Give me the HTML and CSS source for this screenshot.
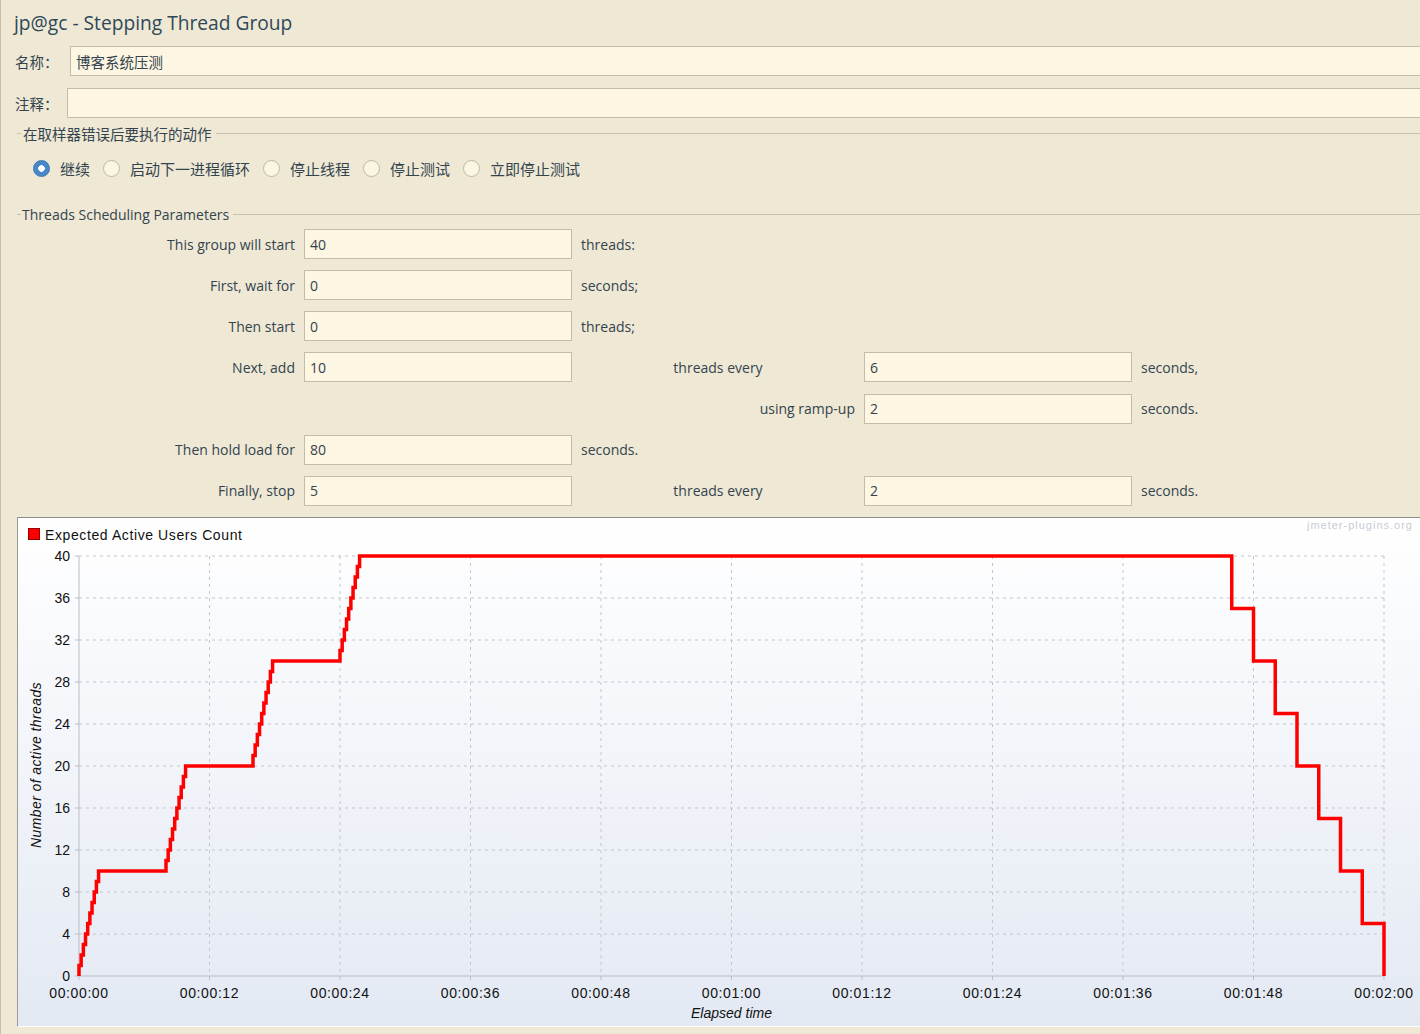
FILE: index.html
```html
<!DOCTYPE html>
<html lang="zh-CN">
<head>
    <meta charset="UTF-8">
    <title>jp@gc - Stepping Thread Group</title>
    <link rel="stylesheet" href="styles.css">
</head>
<body>
    <div class="page">
        <h1 class="title">jp@gc - Stepping Thread Group</h1>

        <div class="field-row name-row">
            <label>名称：</label>
            <input type="text" value="博客系统压测">
        </div>
        <div class="field-row comment-row">
            <label>注释：</label>
            <input type="text" value="">
        </div>

        <div class="group-title"><span>在取样器错误后要执行的动作</span></div>
        <div class="radio-row">
            <label class="radio"><span class="dot checked"></span>继续</label>
            <label class="radio"><span class="dot"></span>启动下一进程循环</label>
            <label class="radio"><span class="dot"></span>停止线程</label>
            <label class="radio"><span class="dot"></span>停止测试</label>
            <label class="radio"><span class="dot"></span>立即停止测试</label>
        </div>

        <div class="group-title params-title"><span>Threads Scheduling Parameters</span></div>
        <div class="params">
            <span class="lbl">This group will start</span>
            <input type="text" value="40">
            <span class="suffix">threads:</span>

            <span class="lbl">First, wait for</span>
            <input type="text" value="0">
            <span class="suffix">seconds;</span>

            <span class="lbl">Then start</span>
            <input type="text" value="0">
            <span class="suffix">threads;</span>

            <span class="lbl">Next, add</span>
            <input type="text" value="10">
            <span class="mid">threads every</span>
            <input type="text" value="6">
            <span class="suffix">seconds,</span>

            <span class="lbl ramp">using ramp-up</span>
            <input type="text" value="2">
            <span class="suffix">seconds.</span>

            <span class="lbl">Then hold load for</span>
            <input type="text" value="80">
            <span class="suffix">seconds.</span>

            <span class="lbl">Finally, stop</span>
            <input type="text" value="5">
            <span class="mid">threads every</span>
            <input type="text" value="2">
            <span class="suffix">seconds.</span>
        </div>

        <div class="chart">
            <svg width="1402" height="508" viewBox="18 518 1402 508">
                <!-- legend + watermark -->
                <rect x="28.5" y="528.5" width="11" height="11" fill="#ff0000" stroke="#900000"/>
                <text class="legend" x="45" y="540">Expected Active Users Count</text>
                <text class="watermark" x="1413" y="529">jmeter-plugins.org</text>

                <!-- grid -->
                <g class="grid">
                    <line x1="79" y1="556" x2="1384" y2="556"/>
                    <line x1="79" y1="598" x2="1384" y2="598"/>
                    <line x1="79" y1="640" x2="1384" y2="640"/>
                    <line x1="79" y1="682" x2="1384" y2="682"/>
                    <line x1="79" y1="724" x2="1384" y2="724"/>
                    <line x1="79" y1="766" x2="1384" y2="766"/>
                    <line x1="79" y1="808" x2="1384" y2="808"/>
                    <line x1="79" y1="850" x2="1384" y2="850"/>
                    <line x1="79" y1="892" x2="1384" y2="892"/>
                    <line x1="79" y1="934" x2="1384" y2="934"/>
                    <line x1="209.5" y1="556" x2="209.5" y2="976"/>
                    <line x1="340" y1="556" x2="340" y2="976"/>
                    <line x1="470.5" y1="556" x2="470.5" y2="976"/>
                    <line x1="601" y1="556" x2="601" y2="976"/>
                    <line x1="731.5" y1="556" x2="731.5" y2="976"/>
                    <line x1="862" y1="556" x2="862" y2="976"/>
                    <line x1="992.5" y1="556" x2="992.5" y2="976"/>
                    <line x1="1123" y1="556" x2="1123" y2="976"/>
                    <line x1="1253.5" y1="556" x2="1253.5" y2="976"/>
                    <line x1="1384" y1="556" x2="1384" y2="976"/>
                </g>

                <!-- axes and ticks -->
                <g class="axis">
                    <line x1="79" y1="556" x2="79" y2="976"/>
                    <line x1="79" y1="976" x2="1384" y2="976"/>
                    <path d="M75 556h4M75 598h4M75 640h4M75 682h4M75 724h4M75 766h4M75 808h4M75 850h4M75 892h4M75 934h4M75 976h4"/>
                    <path d="M79 976v4M209.5 976v4M340 976v4M470.5 976v4M601 976v4M731.5 976v4M862 976v4M992.5 976v4M1123 976v4M1253.5 976v4M1384 976v4"/>
                </g>

                <g class="ylabels">
                    <text x="70" y="561">40</text>
                    <text x="70" y="603">36</text>
                    <text x="70" y="645">32</text>
                    <text x="70" y="687">28</text>
                    <text x="70" y="729">24</text>
                    <text x="70" y="771">20</text>
                    <text x="70" y="813">16</text>
                    <text x="70" y="855">12</text>
                    <text x="70" y="897">8</text>
                    <text x="70" y="939">4</text>
                    <text x="70" y="981">0</text>
                </g>
                <g class="xlabels">
                    <text x="79" y="998">00:00:00</text>
                    <text x="209.5" y="998">00:00:12</text>
                    <text x="340" y="998">00:00:24</text>
                    <text x="470.5" y="998">00:00:36</text>
                    <text x="601" y="998">00:00:48</text>
                    <text x="731.5" y="998">00:01:00</text>
                    <text x="862" y="998">00:01:12</text>
                    <text x="992.5" y="998">00:01:24</text>
                    <text x="1123" y="998">00:01:36</text>
                    <text x="1253.5" y="998">00:01:48</text>
                    <text x="1384" y="998">00:02:00</text>
                </g>
                <text class="axis-title" x="731.5" y="1018">Elapsed time</text>
                <text class="axis-title y-title" transform="translate(41 765) rotate(-90)">Number of active threads</text>

                <!-- expected users: 10 threads per 2s ramp every 6s, hold 80s, stop 5 every 2s -->
                <path class="series" d="M79 976
                    v-10.5h2.175v-10.5h2.175v-10.5h2.175v-10.5h2.175v-10.5h2.175v-10.5h2.175v-10.5h2.175v-10.5h2.175v-10.5h2.175v-10.5h2.175
                    H166
                    v-10.5h2.175v-10.5h2.175v-10.5h2.175v-10.5h2.175v-10.5h2.175v-10.5h2.175v-10.5h2.175v-10.5h2.175v-10.5h2.175v-10.5h2.175
                    H253
                    v-10.5h2.175v-10.5h2.175v-10.5h2.175v-10.5h2.175v-10.5h2.175v-10.5h2.175v-10.5h2.175v-10.5h2.175v-10.5h2.175v-10.5h2.175
                    H340
                    v-10.5h2.175v-10.5h2.175v-10.5h2.175v-10.5h2.175v-10.5h2.175v-10.5h2.175v-10.5h2.175v-10.5h2.175v-10.5h2.175v-10.5h2.175
                    H1231.75 V608.5 H1253.5 V661 H1275.25 V713.5 H1297 V766 H1318.75 V818.5 H1340.5 V871 H1362.25 V923.5 H1384 V976"/>
            </svg>
        </div>
    </div>
</body>
</html>
```

FILE: styles.css
```css
html, body {
    margin: 0;
    padding: 0;
}
body {
    background-color: #eee8d5;
    box-shadow: inset 1px 0 #c9c1ab;
    font-family: "Open Sans", "Noto Sans CJK SC", sans-serif;
    font-size: 14px;
    color: #34444e;
    overflow: hidden;
    height: 1034px;
}
.page {
    padding-top: 11px;
}
.title {
    margin: 0 0 0 14px;
    font-size: 19.2px;
    font-weight: normal;
    line-height: 24px;
    color: #2e4858;
}
input {
    box-sizing: border-box;
    height: 30px;
    margin: 0;
    padding: 0 5px;
    border: 1px solid #c2bca9;
    background-color: #fdf6e3;
    font-family: "Open Sans", "Noto Sans CJK SC", sans-serif;
    font-size: 14px;
    color: #34444e;
    outline: none;
}
.field-row {
    display: flex;
    align-items: center;
    margin-right: -3px;
}
.field-row label {
    padding-left: 15px;
    font-family: "Noto Sans CJK SC", sans-serif;
    font-size: 14.5px;
}
.field-row input {
    flex: 1;
    font-family: "Noto Sans CJK SC", sans-serif;
    font-size: 14.5px;
}
.name-row {
    margin-top: 11px;
}
.name-row label {
    width: 55px;
}
.comment-row {
    margin-top: 12px;
}
.comment-row label {
    width: 52px;
}
.group-title {
    display: flex;
    align-items: center;
    margin: 5px 0 0 17px;
    height: 20px;
}
.group-title::before {
    content: "";
    width: 4px;
    border-top: 1px solid #c8c1ad;
}
.group-title::after {
    content: "";
    flex: 1;
    margin-left: 4px;
    border-top: 1px solid #c8c1ad;
}
.group-title span {
    padding-left: 2px;
    font-family: "Noto Sans CJK SC", sans-serif;
    font-size: 14.5px;
}
.params-title {
    margin-top: 26px;
}
.params-title span {
    padding-left: 1px;
    font-family: "Open Sans", sans-serif;
    font-size: 14px;
}
.radio-row {
    display: flex;
    align-items: center;
    height: 20px;
    margin-top: 15px;
    padding-left: 33px;
    font-family: "Noto Sans CJK SC", sans-serif;
    font-size: 15px;
}
.radio {
    display: flex;
    align-items: center;
    margin-right: 13px;
}
.dot {
    box-sizing: border-box;
    width: 17px;
    height: 17px;
    margin-right: 10px;
    border: 1px solid #bdb6a2;
    border-radius: 50%;
    background-color: #fbf5e4;
}
.dot.checked {
    border-color: #3c78bb;
    background: radial-gradient(circle, #ffffff 0 3px, #4a87c9 3.5px);
}
.params {
    display: grid;
    grid-template-columns: 295px 268px 274px 268px 1fr;
    grid-auto-rows: 30px;
    column-gap: 9px;
    row-gap: 11.17px;
    align-items: center;
    margin-top: 5px;
}
.params .lbl {
    grid-column: 1;
    text-align: right;
}
.params .lbl.ramp {
    grid-column: 3;
}
.params .mid {
    text-align: center;
}
.chart {
    margin: 11px 0 0 17px;
    height: 508px;
    border-top: 1px solid #8c8c8c;
    border-left: 1px solid #9a9a9a;
    border-bottom: 1px solid #ffffff;
    background: linear-gradient(#ffffff, #e3e9f3);
}
.chart svg {
    display: block;
    font-family: "Liberation Sans", Arial, sans-serif;
}
.legend {
    font-size: 14px;
    fill: #111111;
    letter-spacing: 0.6px;
}
.watermark {
    font-size: 11px;
    fill: #c8ccd6;
    text-anchor: end;
    letter-spacing: 1px;
}
.grid line {
    stroke: #c3c5cc;
    stroke-width: 1;
    stroke-dasharray: 3 4;
}
.axis line,
.axis path {
    stroke: #b9bdc6;
    stroke-width: 1;
    fill: none;
}
.ylabels text {
    font-size: 14px;
    fill: #111111;
    text-anchor: end;
}
.xlabels text {
    font-size: 14px;
    fill: #111111;
    text-anchor: middle;
    letter-spacing: 0.6px;
}
.axis-title {
    font-size: 14px;
    font-style: italic;
    fill: #111111;
    text-anchor: middle;
}
.y-title {
    letter-spacing: 0.4px;
}
.series {
    fill: none;
    stroke: #ff0000;
    stroke-width: 3.5;
}
```
